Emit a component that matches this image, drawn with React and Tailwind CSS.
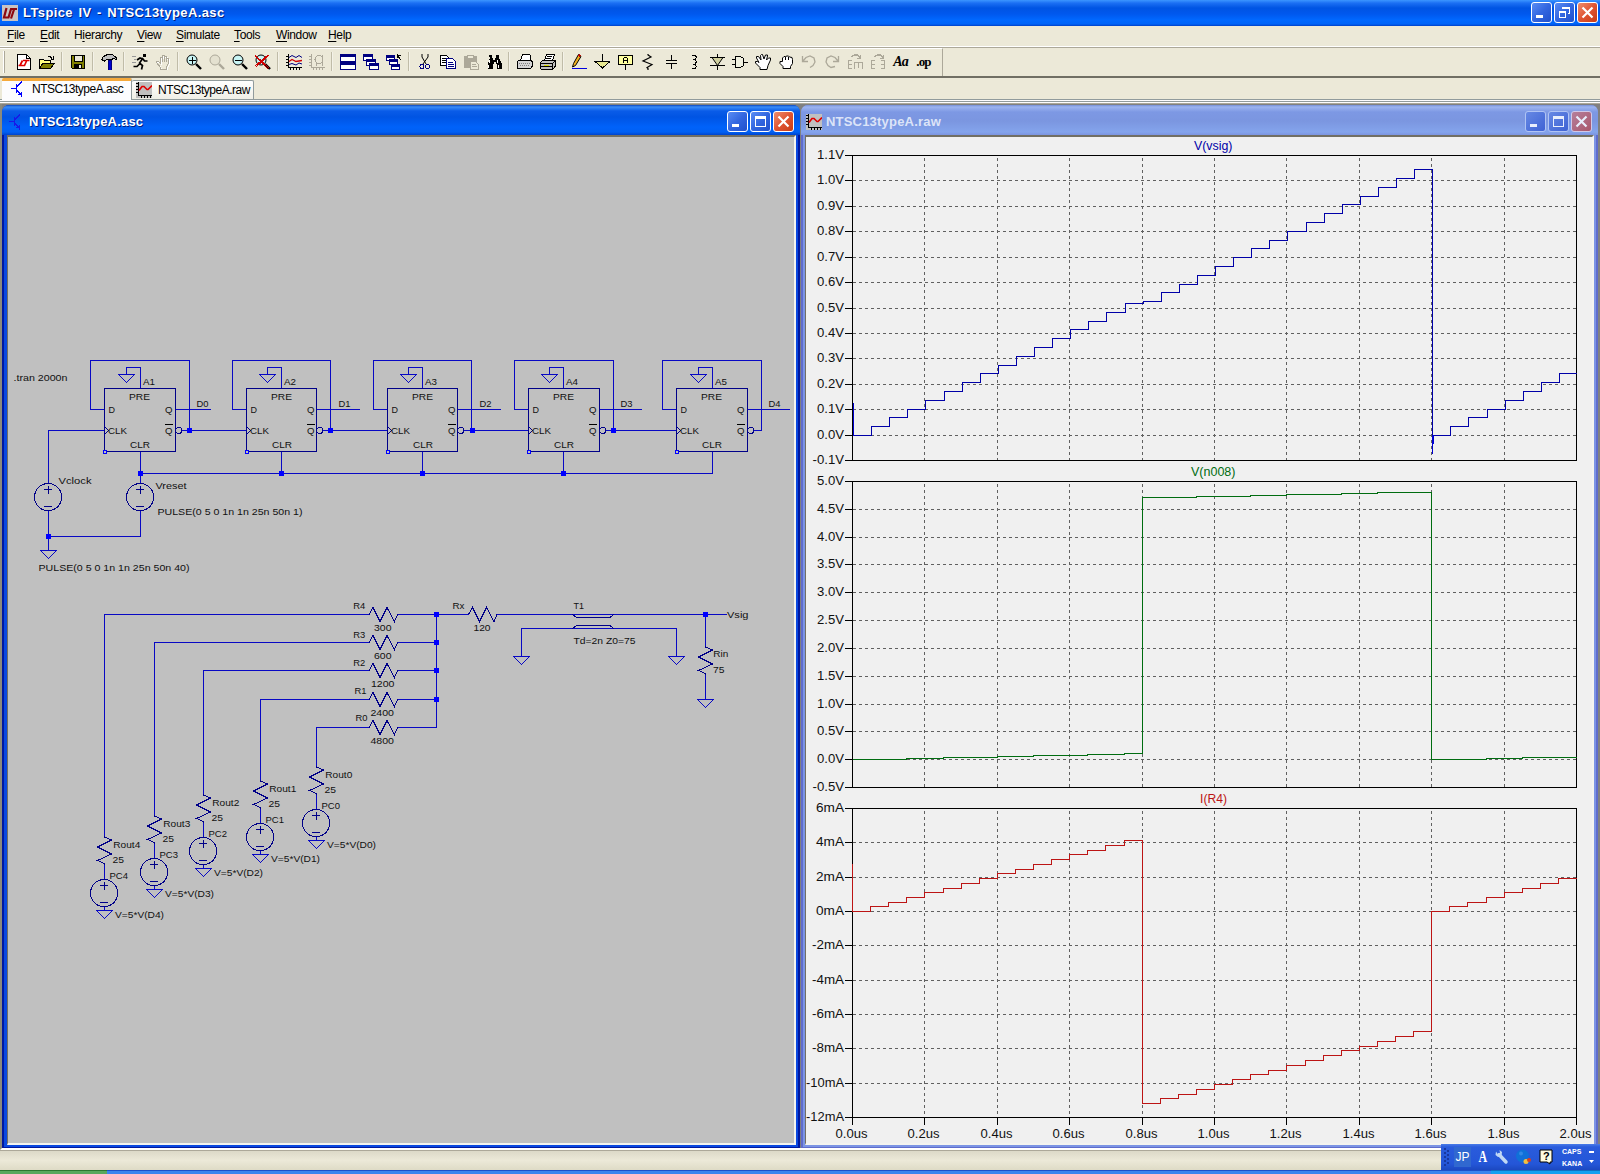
import React from "react";

const WIRE = "#0808c4";
const SYM = "#000088";

/* ---------- toolbar glyphs, 16 x 16 grid ---------- */
function Ico({ children, w = 16 }) {
  return (
    <svg width={w} height="16" viewBox={`0 0 ${w} 16`} shapeRendering="crispEdges" fill="none" stroke="#000" strokeWidth="1">
      {children}
    </svg>
  );
}
const P = (props) => <path {...props} />;

function Magnifier({ c = "#000", lens = "#c8f4f4", mark, markColor = "#000" }) {
  return (
    <Ico>
      <circle cx="6" cy="6" r="5" fill={lens} stroke={c} shapeRendering="auto" />
      <P d="M10 10L15 15" stroke={c} strokeWidth="2.4" shapeRendering="auto" />
      {mark && <P d={mark} stroke={markColor} />}
    </Ico>
  );
}
function Win({ x, y, w = 10, h = 6 }) {
  return (
    <g>
      <rect x={x + 0.5} y={y + 0.5} width={w} height={h} fill="#fff" stroke="#000080" />
      <rect x={x} y={y} width={w + 1} height="3" fill="#000080" stroke="none" />
    </g>
  );
}
const HAND = "M5.5 15.5v-2l-4-5v-1h2l1.5 1.5v-6h2v-1.5h2v1h2v1.5h2v6l-1.5 3.5v2z";

const icons = {
  fresh: (
    <Ico>
      <P d="M1.5 .5h9l4 4v11h-13z" fill="#fff" />
      <P d="M10.5 .5v4h4" />
      <P d="M2.500 11.500h4M4 11.500L6.500 6.500M7 6.500h6.500M10.500 7L8.500 11.500h-2" stroke="#e00000" strokeWidth="1.700" shapeRendering="auto" />
    </Ico>
  ),
  open: (
    <Ico>
      <P d="M.5 14.500v-9h4l1 1h6v3" fill="#ffff80" />
      <P d="M.5 14.500l3.500-5.500h11.500l-4 5.500z" fill="#808000" />
      <P d="M9 2.500h2l2 2M14.500 2v3.500h-3" />
    </Ico>
  ),
  save: (
    <Ico>
      <P d="M1.500 1.500h13v13h-12l-1-1z" fill="#808000" />
      <rect x="4.500" y="1.500" width="8" height="6" fill="#ece9d8" />
      <rect x="4" y="10" width="8" height="5" fill="#000" stroke="none" />
      <rect x="9" y="11" width="2" height="3" fill="#ece9d8" stroke="none" />
    </Ico>
  ),
  hammer: (
    <Ico>
      <P d="M.5 5.500l2-3 4-2h5l4 3.500v1.500l-3-1-2 1h-5l-2 1.500z" fill="#c0c0c0" />
      <rect x="7" y="6" width="3" height="10" fill="#0000d0" stroke="#000080" />
    </Ico>
  ),
  run: (
    <Ico>
      <rect x="11" y="0" width="3" height="3" fill="#000" stroke="none" />
      <P d="M11 4L7.500 9l3 2.500-1 4M8 9.500L5 12.500H1.500M5 6l3-2 3 1 1.500 2H15.500" strokeWidth="1.700" shapeRendering="auto" />
      <P d="M0 2.500h4M2 5.500h2M0 8.500h4" stroke="#999" />
    </Ico>
  ),
  halt: (
    <Ico>
      <P d={HAND} stroke="#fff" transform="translate(1 1)" />
      <P d={HAND} stroke="#aca899" />
      <P d="M7.500 3v5M9.500 2v6M11.500 3v5" stroke="#aca899" />
    </Ico>
  ),
  zin: <Magnifier mark="M3 6.500h7M6.500 3v7" />,
  zpan: <Magnifier c="#aca899" lens="#e4e1d0" />,
  zout: <Magnifier mark="M3 6.500h7" />,
  zfit: <Magnifier mark="M0 1L14 14M14 1L1 13M0 2L13 15M13 1L0 12" markColor="#d00000" />,
  plot: (
    <Ico>
      <P d="M2.500 0v13.500H16M0 2.500h2M0 5.500h2M0 8.500h2M0 11.500h2M4.500 14v2M7.500 14v2M10.500 14v2M13.500 14v2" />
      <P d="M3 3.500l3-2 4 2 3-2 3 2" stroke="#000080" shapeRendering="auto" />
      <P d="M3 7.500l3-2 4 2 6-1" stroke="#d00000" shapeRendering="auto" strokeWidth="1.300" />
      <P d="M3 10.500l3-1 4 1.500 3-2 3 1" stroke="#000080" shapeRendering="auto" />
    </Ico>
  ),
  auto: (
    <Ico>
      <P d="M2.500 0v13.500H16M0 2.500h2M0 5.500h2M0 8.500h2M0 11.500h2M4.500 14v2M7.500 14v2M10.500 14v2M13.500 14v2" stroke="#aca899" />
      <circle cx="10" cy="5.500" r="4" stroke="#aca899" />
      <P d="M7 9v3M13.500 1v11M5 5.500h2" stroke="#aca899" />
    </Ico>
  ),
  tile: (
    <Ico>
      <Win x={0} y={0} w={15} h={7} />
      <Win x={0} y={8} w={15} h={7} />
    </Ico>
  ),
  cascade: (
    <Ico>
      <Win x={0} y={0} w={9} h={6} />
      <Win x={3} y={5} w={9} h={6} />
      <Win x={6} y={9} w={9} h={6} />
    </Ico>
  ),
  closeAll: (
    <Ico>
      <Win x={0} y={1} w={8} h={5} />
      <Win x={3} y={5} w={8} h={5} />
      <Win x={5} y={10} w={8} h={5} />
      <P d="M15 6l-4-5M11 1.500h4M11.500 0v4" />
    </Ico>
  ),
  cut: (
    <Ico>
      <P d="M5 0v3l4 7M11 0v3L6 10" shapeRendering="auto" />
      <circle cx="5" cy="12.500" r="2" stroke="#000080" />
      <circle cx="10.500" cy="12.500" r="2" stroke="#000080" />
    </Ico>
  ),
  copy: (
    <Ico>
      <P d="M.5 1.500h6l2 2v8h-8z" fill="#fff" />
      <P d="M2 4.500h4M2 6.500h4M2 8.500h4" />
      <P d="M6.500 4.500h6l3 3v7h-9z" fill="#fff" stroke="#000080" />
      <P d="M8 8.500h5M8 10.500h6M8 12.500h6" stroke="#000080" />
    </Ico>
  ),
  paste: (
    <Ico>
      <rect x="1.500" y="2.500" width="12" height="11" fill="#aca899" stroke="#aca899" />
      <rect x="4.500" y="1" width="6" height="3" fill="#ece9d8" stroke="#aca899" />
      <P d="M7.500 7.500h5l3 3v5h-8z" fill="#ece9d8" stroke="#aca899" />
      <P d="M9 10.500h4M9 12.500h5" stroke="#aca899" />
    </Ico>
  ),
  find: (
    <Ico>
      <P d="M3 1h3v3h1v2h2v-2h1v-3h3v3l3 6v5h-5v-5h-1v-2h-2v2h-1v5h-5v-5l2-6z" fill="#000" stroke="none" />
      <P d="M3.500 6v3M11.500 6v3M2.500 11v3M12.500 11v3" stroke="#fff" />
    </Ico>
  ),
  preview: (
    <Ico>
      <P d="M3.500 6.500l2-6h7l1 1v5" fill="#fff" />
      <P d="M.5 7.500l2-1.500h11.500l1.500 2v4l-2 2.500h-13z" fill="#d4d4d4" />
      <P d="M2 9.500h11M3 11.500h10" stroke="#808080" strokeDasharray="1 1" />
    </Ico>
  ),
  print: (
    <Ico>
      <P d="M4.500 6.500l2-6h8l-2 6" fill="#fff" />
      <P d="M7 2.500h5M6 4.500h5" />
      <P d="M.5 8.500l3-2.500h11l1 1v5l-3 3.500h-11l-1-1z" fill="#c0c0c0" />
      <P d="M.5 9.500h12l3-3M1 12.500h11M12.500 10v5" />
      <P d="M4 11h5" stroke="#d8d800" />
    </Ico>
  ),
  pencil: (
    <Ico>
      <P d="M2.500 9.500L7.500 .5l2.500 2-5.500 9-3 1.500z" fill="#f0b020" shapeRendering="auto" />
      <P d="M7.500 1l2 1.500" stroke="#c00000" strokeWidth="2" />
      <P d="M1 14.500h15" stroke="#0000e0" />
    </Ico>
  ),
  gnd: (
    <Ico>
      <P d="M8.500 0v7" />
      <P d="M1 7.500h15L8.500 14z" fill="#e8e890" />
    </Ico>
  ),
  label: (
    <Ico>
      <P d="M1.500 1.500h14v9h-14zM8.500 11v5" fill="#ffffa0" strokeWidth="1.300" />
      <P d="M6.500 9V4.500l1-1h2l1 1V9M6.500 6.500h4" strokeWidth="1.400" />
    </Ico>
  ),
  res: <Ico><P d="M8 0v1l3 2-8 4 9 3.500-5 3 1 1v1.500" shapeRendering="auto" strokeWidth="1.200" /></Ico>,
  cap: <Ico><P d="M8.500 1v5M3 6.500h11M3 9.500h11M8.500 10v5" strokeWidth="1.300" /></Ico>,
  ind: <Ico><P d="M6 1.500h3l1.500 1.500-1.500 2.500h-2M9 5.500l1.500 2L9 10.500h-2M9 10.500l1.500 2-1.500 2H6" /></Ico>,
  diode: (
    <Ico>
      <P d="M8.500 0v3M1 3.500h15M8.500 12v4M1 11.500h15" />
      <P d="M3 3.500h11L8.500 11.500z" fill="#d0d0a0" shapeRendering="auto" />
    </Ico>
  ),
  gate: (
    <Ico>
      <P d="M3.500 2.500h5l3 2v7l-3 2h-5zM0 5.500h3M0 10.500h3M12 8.500h4" fill="#f0f0e0" />
    </Ico>
  ),
  move: (
    <Ico>
      <P d="M5 15.500v-2L.5 9V7.500h2L4 8.500 1.500 4V2.500h2L6 6 5.500 1.500l1-1h1L9 5l1.500-4h2v1L11.500 6l2-2h2v2L13 11.500l-1 4z" fill="#fff" shapeRendering="auto" />
    </Ico>
  ),
  drag: (
    <Ico>
      <P d="M5 14.500v-2L2 9.500V7.500h2.500V4l1.500-1.500h1.500L9 2h1.500l1 1 2.500.5.5 2v4l-2 3v2z" fill="#fff" shapeRendering="auto" />
      <P d="M7.500 3v3M10.500 3v3" />
    </Ico>
  ),
  undo: <Ico><P d="M1.500 2v5.500h5.500M2 7L5 3.500 9 2l4 2 1 4-2 3.500-3 2" stroke="#aca899" strokeWidth="1.300" shapeRendering="auto" /></Ico>,
  redo: <Ico><P d="M14.500 2v5.500H9M14 7l-3-3.500L7 2 3 4 2 8l2 3.500 3 2 4-1" stroke="#aca899" strokeWidth="1.300" shapeRendering="auto" /></Ico>,
  rotate: (
    <Ico>
      <P d="M5 6.500H1.500v8H5M1.500 10.500H5M7.500 14.500v-6h8v6M11.500 9v5M4 3l3-2h4l2 3M13.500 1v3.500H10" stroke="#aca899" strokeWidth="1.300" />
    </Ico>
  ),
  mirror: (
    <Ico>
      <P d="M5 6.500H1.500v8H5M1.500 10.500H5M11 6.500h3.500v8H11M14.500 10.500H11M4 3l3-2h4l2 3M13.500 1v3.500H10" stroke="#aca899" strokeWidth="1.300" />
    </Ico>
  ),
  text: <span className="text-[14px] font-bold italic leading-none tracking-[-1px]" style={{ fontFamily: '"Liberation Serif", serif' }}>Aa</span>,
  op: <span className="mb-[1px] text-[13px] font-bold leading-none tracking-[-0.8px]" style={{ fontFamily: '"Liberation Serif", serif' }}>.op</span>,
};

const toolGroups = [
  ["fresh", "open"], ["save"], ["hammer"], ["run", "halt"], ["zin", "zpan", "zout", "zfit"],
  ["plot", "auto"], ["tile", "cascade", "closeAll"], ["cut", "copy", "paste", "find"], ["preview", "print"],
  ["pencil", "gnd", "label", "res", "cap", "ind", "diode", "gate", "move", "drag", "undo", "redo", "rotate", "mirror", "text", "op"],
];

const menus = [
  ["", "F", "ile", "w-[33px]"], ["", "E", "dit", "w-[34px]"], ["H", "i", "erarchy", "w-[63px]"], ["", "V", "iew", "w-[39px]"],
  ["", "S", "imulate", "w-[58px]"], ["", "T", "ools", "w-[42px]"], ["", "W", "indow", "w-[52px]"], ["", "H", "elp", "w-[30px]"],
];

function TransistorIcon({ color = "#0000ff" }) {
  return (
    <svg width="16" height="16" viewBox="0 0 16 16" shapeRendering="crispEdges" fill="none" stroke={color}>
      <path d="M0 7.500h5M5.500 3v9M6 5.500L10.500 1V0M6 9.500l4.500 5v1M7 13.500h3.500v-3" strokeWidth="1.300" />
    </svg>
  );
}
function WaveIcon() {
  return (
    <svg width="16" height="16" viewBox="0 0 16 16" shapeRendering="crispEdges" fill="none">
      <rect width="16" height="16" fill="#c0c0c0" />
      <path d="M2.500 0v13.500H16M0 1.500h2M0 4.500h2M0 7.500h2M0 10.500h2M5.500 14v2M8.500 14v2M11.500 14v2M14.500 14v2" stroke="#000" strokeWidth="1.200" />
      <path d="M3 8.500l3-4h2l3 3h1l4-4" stroke="#e00000" strokeWidth="1.600" shapeRendering="auto" />
    </svg>
  );
}
function LtLogo() {
  return (
    <svg width="16" height="16" viewBox="0 0 16 16">
      <rect width="16" height="16" fill="#c8c4c4" />
      <path d="M4.500 3L2 12.500h4.500l2.500-8.500h6M12 4.500l-3 9" stroke="#8c0810" strokeWidth="2.200" fill="none" />
    </svg>
  );
}

function CaptionButton({ kind, dim }) {
  const close = kind === "close";
  const bg = close
    ? dim ? "bg-gradient-to-br from-[#b57f9c] to-[#a8566c] border-[#d0c8e8]" : "bg-gradient-to-br from-[#ec8c6c] via-[#e05432] to-[#c83c14] border-white"
    : dim ? "bg-gradient-to-br from-[#6688e4] to-[#3f62d4] border-[#b0c4f4]" : "bg-gradient-to-br from-[#5a8cf4] via-[#3366e0] to-[#2050cc] border-white";
  const ink = dim ? "#e8eefc" : "#fff";
  return (
    <div className={`flex h-[21px] w-[21px] items-center justify-center rounded-[3px] border ${bg}`}>
      <svg width="19" height="19" viewBox="0 0 19 19" fill="none" stroke={ink} shapeRendering="crispEdges">
        {kind === "min" && <rect x="4" y="12" width="7" height="3" fill={ink} stroke="none" />}
        {kind === "max" && <><path d="M4.500 4.500h10v9.500h-10z" /><path d="M4 5h11" strokeWidth="3" /></>}
        {kind === "restore" && <><path d="M7.500 6V4.500h7v6H13" /><path d="M7 4.500h8" strokeWidth="2" /><path d="M4.500 8.500h6v6h-6z" /><path d="M4 8.500h7" strokeWidth="2" /></>}
        {close && <path d="M4.500 4.500l10 10M14.500 4.500l-10 10" strokeWidth="2.200" shapeRendering="auto" />}
      </svg>
    </div>
  );
}

/* ---------- schematic ---------- */
function T({ x, y, w, children, fill = "#101010", size = 9.8 }) {
  return <text x={x} y={y} textLength={w} lengthAdjust="spacingAndGlyphs" fontSize={size} fill={fill}>{children}</text>;
}
function Wire({ d, c = WIRE }) {
  return <path d={d} stroke={c} fill="none" />;
}
const Node = ({ x, y }) => <rect x={x - 2} y={y - 2} width="5" height="5" fill="#0000ff" />;
const Gnd = ({ x, y }) => <path d={`M${x - 7.5} ${y + 0.5}h16l-8 8z`} stroke={WIRE} fill="none" />;
const ResH = ({ x, y }) => <path d={`M${x} ${y + 0.5}l4-7 7 14 7-14 7.500 14 3-7`} stroke={SYM} fill="none" />;
const ResV = ({ x, y }) => <path d={`M${x + 0.5} ${y}v1l7 3-14 7 14 7-14 6.500 7 3v1`} stroke={SYM} fill="none" />;
function Source({ x, y }) {
  return (
    <g stroke={SYM} fill="none">
      <circle cx={x + 0.1} cy={y + 0.1} r="13.600" />
      <path d={`M${x - 4} ${y - 7.5}h8M${x + 0.5} ${y - 11}v8M${x - 4} ${y + 9.5}h8`} />
    </g>
  );
}
const flipFlops = [
  { b: 104, n: "A1", d: "D0", q: 107, p: 36, w: 71 },
  { b: 246, n: "A2", d: "D1", q: 114, p: 35, w: 70 },
  { b: 387, n: "A3", d: "D2", q: 114, p: 35, w: 70 },
  { b: 528, n: "A4", d: "D3", q: 114, p: 35, w: 71 },
  { b: 676, n: "A5", d: "D4", q: 114, p: 36, w: 71 },
];
function FlipFlop({ b, n, d, q, p, w, last }) {
  return (
    <g>
      <rect x={b + 0.5} y="388.500" width={w} height="63" fill="none" stroke={SYM} />
      <Wire d={`M${b} 409.500h-13.500v-49H${b + w + 14.5}v70h${last ? -8 : 0}`} />
      <Wire d={`M${b + p + 0.5} 388v-20.500h-14v7`} />
      <Gnd x={b + p - 14} y={374} />
      <Wire d={`M${b + w + 1} 409.500H${b + q}`} />
      <Wire d={`M${b + w + 7} 430.500H${b + 86}`} />
      <Wire d={`M${b + p + 0.5} 452v21`} />
      <circle cx={b + w + 3.7} cy="430.400" r="3" fill="none" stroke={SYM} />
      <path d={`M${b + 1} 427l3.500 3.500-3.500 3.500`} fill="none" stroke={SYM} />
      <rect x={b - 0.5} y="450.500" width="3" height="3" fill="#c0c0c0" stroke="#0000ff" />
      <T x={b + p + 3} y={384.5} w={12}>{n}</T>
      <T x={b + 25} y={399.5} w={21}>PRE</T>
      <T x={b + 4.500} y={412.5} w={6.500}>D</T>
      <T x={b + 61} y={412.5} w={7.500}>Q</T>
      <T x={b + 4} y={433.5} w={19}>CLK</T>
      <T x={b + 61} y={433.5} w={7.500}>Q</T>
      <path d={`M${b + 61} 424.500h8`} stroke="#000" />
      <T x={b + 26} y={447.5} w={20}>CLR</T>
      <T x={b + 92.500} y={406.5} w={12}>{d}</T>
    </g>
  );
}
const ladder = [
  { k: 4, x: 104, y: 614, t: 837, v: "300", nx: 353.300, vx: 374, vw: 17.500, ny: 609 },
  { k: 3, x: 154, y: 642, t: 816, v: "600", nx: 353.300, vx: 374, vw: 17.500, ny: 637.500 },
  { k: 2, x: 203, y: 670, t: 795, v: "1200", nx: 353.300, vx: 371, vw: 23.500, ny: 665.500 },
  { k: 1, x: 260, y: 699, t: 781, v: "2400", nx: 354.500, vx: 370.500, vw: 23.500, ny: 694 },
  { k: 0, x: 316, y: 727, t: 767, v: "4800", nx: 355.500, vx: 370.500, vw: 23.500, ny: 721 },
];
function Schematic() {
  return (
    <svg width="786" height="1006" viewBox="8 137 786 1006" className="block" shapeRendering="crispEdges" fontFamily='"Liberation Sans", Arial, sans-serif'>
      <T x={13.500} y={381} w={54}>.tran 2000n</T>
      {flipFlops.map((f, i) => <FlipFlop key={f.n} {...f} last={i === 4} />)}
      <Wire d="M189 430.500H246M330 430.500H387M471 430.500H528M613 430.500H676" />
      <Wire d="M140 473.500H712.500M104 430.500H48.500V484M140.500 473v11M48.500 511v40M140.500 511v25.500H48" />
      {[140, 281, 422, 563].map((x) => <Node key={x} x={x} y={473} />)}
      {[189, 330, 472, 613].map((x) => <Node key={x} x={x} y={430} />)}
      <Node x={48} y={536} />
      <Source x={48} y={497} />
      <Source x={140} y={497} />
      <Gnd x={48} y={550} />
      <T x={58.500} y={484} w={33}>Vclock</T>
      <T x={155.500} y={489} w={31}>Vreset</T>
      <T x={157.500} y={515} w={145}>PULSE(0 5 0 1n 1n 25n 50n 1)</T>
      <T x={38.500} y={571} w={151}>PULSE(0 5 0 1n 1n 25n 50n 40)</T>

      {ladder.map((r) => (
        <g key={r.k}>
          <Wire d={`M${r.x + 0.5} ${r.t}V${r.y + 0.5}H369M397 ${r.y + 0.5}H436`} />
          <ResH x={369} y={r.y} />
          <T x={r.nx} y={r.ny} w={12}>{`R${r.k}`}</T>
          <T x={r.vx} y={r.y + 17} w={r.vw}>{r.v}</T>
          <ResV x={r.x} y={r.t - 1} />
          <Wire d={`M${r.x + 0.5} ${r.t + 28}v14M${r.x + 0.5} ${r.t + 70}v4`} />
          <Source x={r.x} y={r.t + 56} />
          <Gnd x={r.x} y={r.t + 73} />
          <T x={r.x + 9.300} y={r.t + 10.500} w={27}>{`Rout${r.k}`}</T>
          <T x={r.x + 8.500} y={r.t + 25.5} w={11.500}>25</T>
          <T x={r.x + 5.500} y={r.t + 41.5} w={18.500}>{`PC${r.k}`}</T>
          <T x={r.x + 11} y={r.t + 80.500} w={49}>{`V=5*V(D${r.k})`}</T>
        </g>
      ))}
      <Wire d="M436.500 614V727.500M436 614.500H469M497 614.500H727M705.500 614V646M705.500 674v26" />
      <Wire d="M521.500 656V628.500H676.500V656" />
      <path d="M572 614.500l5 3h33l4-3M572 628.500l5-3h33l4 3" fill="none" stroke={SYM} />
      <ResH x={468.500} y={614} />
      <ResV x={705} y={646} />
      {[614, 642, 670, 699].map((y) => <Node key={y} x={436} y={y} />)}
      <Node x={705} y={614} />
      <Gnd x={521} y={656} /><Gnd x={676} y={656} /><Gnd x={705} y={699} />
      <T x={452.500} y={609} w={12}>Rx</T>
      <T x={473.500} y={631} w={17}>120</T>
      <T x={573.500} y={609} w={10.500}>T1</T>
      <T x={573.500} y={644} w={62}>Td=2n Z0=75</T>
      <T x={727} y={618} w={21.500}>Vsig</T>
      <T x={713.300} y={656.500} w={15}>Rin</T>
      <T x={713} y={672.500} w={11.500}>75</T>
    </svg>
  );
}

/* ---------- waveform panes ---------- */
const X0 = 852, X1 = 1576, SX = 18.1;
const panes = [
  { top: 155, bottom: 460, color: "#0000a8", title: "V(vsig)", tx: 1194, tw: 38.500, ty: 149.500,
    labels: ["1.1V", "1.0V", "0.9V", "0.8V", "0.7V", "0.6V", "0.5V", "0.4V", "0.3V", "0.2V", "0.1V", "0.0V", "-0.1V"] },
  { top: 481, bottom: 787, color: "#006c10", title: "V(n008)", tx: 1191, tw: 44.500, ty: 475.500,
    labels: ["5.0V", "4.5V", "4.0V", "3.5V", "3.0V", "2.5V", "2.0V", "1.5V", "1.0V", "0.5V", "0.0V", "-0.5V"] },
  { top: 808, bottom: 1117, color: "#bc1414", title: "I(R4)", tx: 1200, tw: 27, ty: 803,
    labels: ["6mA", "4mA", "2mA", "0mA", "-2mA", "-4mA", "-6mA", "-8mA", "-10mA", "-12mA"] },
];
function stair(level, spike, off) {
  let d = spike;
  for (let k = 0; k < 40; k++) {
    const x = Math.round(X0 + off + k * SX);
    const y = Math.round(level(k % 32));
    d += `${d ? "L" : "M"}${x + 0.5} ${y + 0.5}H${Math.min(X1, Math.round(X0 + off + (k + 1) * SX)) + 0.5}`;
  }
  return d;
}
const traces = [
  stair((k) => (k < 16 ? 435 - 8.8 * k : 301.2 - 8.8 * (k - 16)), "M853.500 403V435", 1),
  stair((k) => (k < 16 ? 759.4 - 0.4 * k : 497.4 - 0.38 * (k - 16)), "", 0),
  stair((k) => (k < 16 ? 911.2 - 4.73 * k : 1103.2 - 4.8 * (k - 16)), "M852.500 864V911", 0),
];
const labelWidth = (s) => (s.endsWith("mA") ? { 3: 28, 4: 32, 5: 38 }[s.length] : s.length === 4 ? 27 : 31.5);
function Waveforms() {
  return (
    <svg width="787" height="1006" viewBox="806 137 787 1006" className="block" shapeRendering="crispEdges" fontFamily='"Liberation Sans", Arial, sans-serif'>
      {panes.map((p, i) => {
        const n = p.labels.length - 1;
        const ys = p.labels.map((_, j) => Math.round(p.top + ((p.bottom - p.top) * j) / n));
        return (
          <g key={p.title}>
            {ys.slice(1, -1).map((y) => <path key={y} d={`M853 ${y + 0.5}H1576`} stroke="#606060" strokeDasharray="3 3" />)}
            {Array.from({ length: 9 }, (_, j) => Math.round(X0 + 72.4 * (j + 1))).map((x) => (
              <path key={x} d={`M${x + 0.5} ${p.top + 3}V${p.bottom}`} stroke="#606060" strokeDasharray="3 3" />
            ))}
            {ys.map((y) => <path key={y} d={`M845 ${y + 0.5}H852`} stroke="#000" />)}
            <rect x={X0 + 0.5} y={p.top + 0.5} width={X1 - X0} height={p.bottom - p.top} fill="none" stroke="#000" />
            {p.labels.map((s, j) => <T key={s} x={844 - labelWidth(s)} y={ys[j] + 4} w={labelWidth(s)} size={12}>{s}</T>)}
            <T x={p.tx} y={p.ty} w={p.tw} size={12} fill={p.color}>{p.title}</T>
            <path d={traces[i]} fill="none" stroke={p.color} />
          </g>
        );
      })}
      <path d="M853.500 403V436M1432.500 435V453.500M1433.500 435V444" stroke="#0000d0" />
      {Array.from({ length: 11 }, (_, j) => {
        const x = Math.round(X0 + 72.4 * j);
        return (
          <g key={j}>
            <path d={`M${x + 0.5} 1118V1125`} stroke="#000" />
            <T x={x - 16.500} y={1137.5} w={32} size={12}>{`${(j * 0.2).toFixed(1)}us`}</T>
          </g>
        );
      })}
    </svg>
  );
}

function MdiWindow({ active, title, icon, width, children }) {
  const frame = active ? "bg-[#0a48e0]" : "bg-[#7c94e4]";
  const bar = active
    ? "bg-[linear-gradient(#0a48c0_0,#3a8cf8_2px,#0a5ce8_6px,#0054e3_12px,#0062fa_22px,#0060f4_27px,#0044cc_30px)] text-white"
    : "bg-[linear-gradient(#7690d8_0,#9cb4f0_2px,#7d98e4_7px,#7b96e0_16px,#84a4ec_27px,#7c94e0_30px)] text-[#dce4f8] pr-[6px]";
  return (
    <div className={`flex h-[1043px] flex-col overflow-hidden rounded-t-[7px] ${frame} ${width}`}>
      <div className={`flex h-[30px] shrink-0 items-center pr-[6px] ${bar} ${active ? "pl-[7px]" : "pl-[5px]"}`}>
        <div className="mt-[3px]">{icon}</div>
        <span className={`ml-[4px] mt-[3px] flex-1 whitespace-nowrap text-[13px] font-bold tracking-[0.2px] ${active ? "[text-shadow:1px_1px_0_#002080]" : ""}`}>{title}</span>
        <div className="mt-[3px] flex gap-[2px]">
          <CaptionButton kind="min" dim={!active} />
          <CaptionButton kind="max" dim={!active} />
          <CaptionButton kind="close" dim={!active} />
        </div>
      </div>
      <div className={`flex flex-1 border-x-[2px] border-b-[2px] pr-[2px] pb-[2px] ${active ? "border-[#0018a0] pl-[3px]" : "border-[#5f6ccc] pl-[2px]"}`}>
        <div className={`w-full overflow-hidden border-t-2 border-l border-r-2 border-b-2 border-t-[#716f64] border-l-[#716f64] border-b-[#f4f4f0] border-r-[#f4f4f0] ${active ? "bg-[#c0c0c0]" : "bg-[#f0f0f0]"}`}>
          {children}
        </div>
      </div>
    </div>
  );
}

export default function App() {
  return (
    <div className="relative flex h-[1174px] w-[1600px] flex-col overflow-hidden bg-[#ece9d8] text-[12px] text-black" style={{ fontFamily: '"Liberation Sans", Arial, sans-serif' }}>
      <header className="flex h-[26px] shrink-0 items-center bg-[linear-gradient(#3c96ff_0,#1c70f4_3px,#0054e3_8px,#0058ee_14px,#0068ff_20px,#0064f8_24px,#0040c8_26px)] pl-[2px] pr-[2px]">
        <div className="mb-[1px]"><LtLogo /></div>
        <span className="ml-[5px] flex-1 whitespace-nowrap text-[13px] font-bold tracking-[0.4px] [word-spacing:1.5px] text-white [text-shadow:1px_1px_0_#002080]">LTspice IV - NTSC13typeA.asc</span>
        <div className="mb-[1px] flex gap-[2px]">
          <CaptionButton kind="min" />
          <CaptionButton kind="restore" />
          <CaptionButton kind="close" />
        </div>
      </header>

      <nav className="flex h-[21px] shrink-0 items-center border-b border-white pb-[2px] pl-[7px] tracking-[-0.35px]">
        {menus.map(([pre, k, rest, w]) => (
          <span key={pre + k + rest} className={`whitespace-nowrap ${w}`}>
            {pre}<span className="underline underline-offset-2">{k}</span>{rest}
          </span>
        ))}
      </nav>

      <div className="flex h-[31px] shrink-0 border-b-2 border-t border-b-[#716f64] border-t-[#aca899]">
        <div className="flex w-[943px] items-center border-r border-t border-r-[#aca899] border-t-white pb-[2px] pl-[3px]">
          <div className="mr-[7px] h-[22px] w-[2px] border-r border-[#aca899] bg-white" />
          {toolGroups.map((g, i) => (
            <React.Fragment key={g[0]}>
              {i > 0 && <div className="mx-[3px] h-[19px] w-[2px] border-l border-[#c0bca8] bg-[#f4f2e8]" />}
              {g.map((name) => (
                <div key={name} className="flex h-[22px] w-[23px] items-center justify-center">{icons[name]}</div>
              ))}
            </React.Fragment>
          ))}
        </div>
      </div>

      <div className="flex h-[22px] shrink-0 border-b border-[#919b9c] pl-[2px]">
        <div className="flex h-[22px] w-[130px] items-center rounded-t-[2px] border-r border-t-[3px] border-r-[#919b9c] border-t-[#f5a93c] bg-[#fcfcfe] pb-[3px] pl-[9px]">
          <TransistorIcon />
          <span className="ml-[5px] whitespace-nowrap tracking-[-0.5px]">NTSC13typeA.asc</span>
        </div>
        <div className="mt-[2px] flex h-[19px] w-[122px] items-center rounded-t-[2px] border-r border-t border-[#919b9c] bg-gradient-to-b from-white to-[#f0efe6] pl-[4px]">
          <WaveIcon />
          <span className="ml-[6px] whitespace-nowrap tracking-[-0.5px]">NTSC13typeA.raw</span>
        </div>
      </div>
      <div className="h-[4px] shrink-0 border-b border-[#aca899] bg-[#fcfcfe] pt-[1px]">
        <div className="h-px bg-[#919b9c]" />
      </div>

      <main className="flex h-[1046px] shrink-0 gap-[1px] border-b-2 border-l-2 border-b-white border-l-[#8c8a7c] bg-[#808080] pt-[1px]">
        <MdiWindow active title="NTSC13typeA.asc" icon={<TransistorIcon color="#1818e8" />} width="w-[798px]">
          <Schematic />
        </MdiWindow>
        <MdiWindow title="NTSC13typeA.raw" icon={<WaveIcon />} width="w-[797px]">
          <Waveforms />
        </MdiWindow>
      </main>

      <footer className="h-[20px] shrink-0 border-t border-[#aca899] bg-gradient-to-b from-[#dcd9c8] via-[#ece9d8] to-[#dedbc6]" />
      <div className="flex flex-1 bg-[#3a84ee]">
        <div className="w-[107px] border-t border-[#2c7830] bg-[#58a85c]" />
        <div className="flex-1 border-t border-[#1c50c8]" />
        <div className="w-[109px] border-t border-[#1470c0] bg-[#16a0f0]" />
      </div>

      <div className="absolute bottom-[4px] right-0 flex h-[26px] w-[159px] items-center bg-[linear-gradient(#4a7ce8_0,#2a5cdc_3px,#2456d8_20px,#1c48c0)] pl-[3px] text-white">
        <svg width="5" height="18" viewBox="0 0 5 18" fill="#1838a0">
          {[0, 4, 8, 12, 16].map((y) => <React.Fragment key={y}><rect x="0" y={y} width="2" height="2" /><rect x="3" y={y + 2} width="2" height="2" /></React.Fragment>)}
        </svg>
        <span className="ml-[5px] flex h-[20px] w-[17px] items-center justify-center bg-[#3068d0] text-[12px]">JP</span>
        <span className="ml-[6px] w-[12px] scale-x-75 text-[16px] font-bold leading-none" style={{ fontFamily: '"Liberation Serif", serif' }}>A</span>
        <svg className="ml-[5px]" width="15" height="16" viewBox="0 0 15 16" fill="none">
          <path d="M5 5.500L12 13" stroke="#c0d8f4" strokeWidth="3.500" strokeLinecap="round" />
          <path d="M2 2.500L1.500 6 4 8l3.500-1 .5-4-2.500-2 .5 3-2 1.500z" fill="#c0d8f4" />
        </svg>
        <svg className="ml-[6px]" width="17" height="16" viewBox="0 0 17 16">
          <circle cx="7.500" cy="7" r="6.500" fill="#1070d8" />
          <circle cx="6" cy="4.500" r="2" fill="#3088e4" />
          <circle cx="11" cy="12.500" r="2.500" fill="#f0c040" />
          <circle cx="14" cy="11" r="2" fill="#d84020" />
        </svg>
        <svg className="ml-[7px]" width="15" height="16" viewBox="0 0 15 16">
          <path d="M1 1h12v12h-2v2l-3-2H1z" fill="#fffce0" stroke="#000" />
          <text x="4" y="11" fontSize="11" fontWeight="bold" fill="#000">?</text>
        </svg>
        <div className="ml-[8px] flex w-[23px] flex-col gap-[5px] text-[7px] font-bold leading-[7px]">
          <span>CAPS</span><span>KANA</span>
        </div>
        <div className="ml-[4px] flex flex-col items-center gap-[7px]">
          <div className="h-[2px] w-[5px] bg-white" />
          <svg width="5" height="3" viewBox="0 0 5 3"><path d="M0 0h5L2.500 3z" fill="#fff" /></svg>
        </div>
      </div>
    </div>
  );
}
